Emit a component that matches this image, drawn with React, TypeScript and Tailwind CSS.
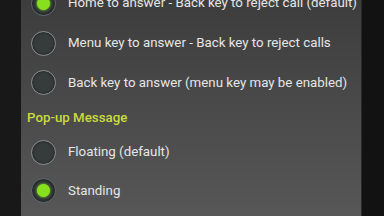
import React from 'react';

type Option = { label: string; checked?: boolean };

const Radio: React.FC<{ checked?: boolean }> = ({ checked }) => (
  <div
    className={`w-[25px] h-[25px] shrink-0 rounded-full border-[1.5px] flex items-center justify-center shadow-[inset_0_0_3px_rgba(0,0,0,0.6)] ${
      checked ? 'border-[#5f6a70] bg-[#2f3434]' : 'border-[#8c8f90] bg-[#363b3b]'
    }`}
  >
    {checked && <div className="w-[13px] h-[13px] rounded-full bg-[#86e01e] shadow-[0_0_3px_#9cf23a]" />}
  </div>
);

const Row: React.FC<Option & { h: string }> = ({ label, checked, h }) => (
  <div className={`flex items-center pl-[10px] ${h}`}>
    <Radio checked={checked} />
    <span className="ml-[12px] text-[13.3px] text-[#e6e6e6] whitespace-nowrap">{label}</span>
  </div>
);

export default function App() {
  return (
    <div className="w-[384px] h-[216px] overflow-hidden flex bg-[#121212] font-['Roboto',sans-serif]">
      <div className="w-[21px] shrink-0 bg-[#181818]" />
      <div className="w-[341px] shrink-0 h-full bg-gradient-to-b from-[#3d3d3d] to-[#575757] border-r border-[#2a2a2a] flex flex-col">
        <div className="-mt-[17px]">
          <Row h="h-[40px]" label="Home to answer - Back key to reject call (default)" checked />
          <Row h="h-[40px]" label="Menu key to answer - Back key to reject calls" />
          <Row h="h-[39px]" label="Back key to answer (menu key may be enabled)" />
          <div className="h-[32px] flex items-center pl-[6px] pb-[1px]">
            <span className="text-[13.3px] font-medium text-[#c9dc3c]">Pop-up Message</span>
          </div>
          <Row h="h-[36px]" label="Floating (default)" />
          <Row h="h-[41px]" label="Standing" checked />
        </div>
      </div>
      <div className="flex-1 bg-[#121212]" />
    </div>
  );
}
